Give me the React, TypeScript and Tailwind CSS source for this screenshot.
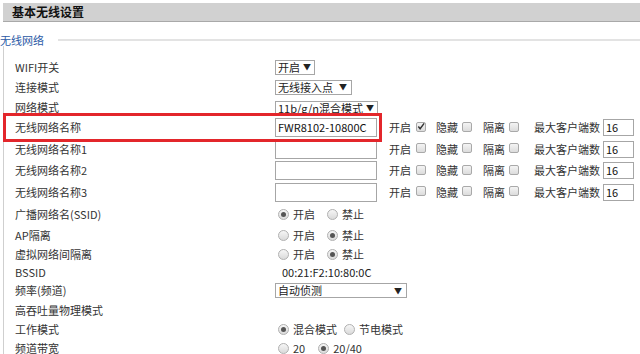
import React from "react";

const font = { fontFamily: '"Noto Sans CJK SC", "Noto Sans", sans-serif' };

function Select({ w, text }: { w: string; text: string }) {
  return (
    <div className={`${w} h-[15px] border border-[#a6a6a6] bg-white flex items-center justify-between pl-[2px] pr-[4px] text-[11px] leading-none text-[#222] whitespace-nowrap overflow-hidden`}>
      <span>{text}</span>
      <span className="text-[8px] text-[#222] ml-[3px]">▼</span>
    </div>
  );
}

function Checkbox({ checked }: { checked?: boolean }) {
  return (
    <div className="w-[10px] h-[10px] border border-[#a9a9a9] rounded-[2px] bg-gradient-to-b from-[#f4f4f4] to-[#dcdcdc] flex items-center justify-center mb-[2px]">
      {checked && (
        <svg width="9" height="9" viewBox="0 0 9 9">
          <path d="M1.5 4.5 L3.5 7 L8 1" stroke="#333" strokeWidth="1.6" fill="none" />
        </svg>
      )}
    </div>
  );
}

function Radio({ checked }: { checked?: boolean }) {
  return (
    <div className="w-[11px] h-[11px] rounded-full border border-[#b0b0b0] bg-gradient-to-b from-[#f6f6f6] to-[#dadada] flex items-center justify-center">
      {checked && <div className="w-[5px] h-[5px] rounded-full bg-[#555]" />}
    </div>
  );
}

function Row({ h, label, children, extra }: { h: string; label: string; children?: React.ReactNode; extra?: React.ReactNode }) {
  return (
    <div className={`relative flex items-center ${h} pl-[11px]`}>
      <div className="w-[260px] text-[11px] leading-none text-[#333] whitespace-nowrap">{label}</div>
      {children}
      {extra}
    </div>
  );
}

function SsidControls({ value, checked }: { value: string; checked?: boolean }) {
  return (
    <div className="flex items-center">
      <div className="w-[102px] h-[19px] border border-[#a6a6a6] bg-white flex items-center pl-[2px] text-[11px] leading-none text-[#111]">
        {value}
      </div>
      <div className="flex items-center ml-[12px] w-[47px] text-[11px] leading-none text-[#333]">
        <span>开启</span>
        <span className="ml-[5px]"><Checkbox checked={checked} /></span>
      </div>
      <div className="flex items-center w-[47px] text-[11px] leading-none text-[#333]">
        <span>隐藏</span>
        <span className="ml-[4px]"><Checkbox /></span>
      </div>
      <div className="flex items-center w-[51px] text-[11px] leading-none text-[#333]">
        <span>隔离</span>
        <span className="ml-[4px]"><Checkbox /></span>
      </div>
      <div className="w-[69px] text-[11px] leading-none text-[#333] whitespace-nowrap">最大客户端数</div>
      <div className="w-[31px] h-[17px] border border-[#a6a6a6] bg-white flex items-center pl-[2px] text-[11px] leading-none text-[#111]">
        16
      </div>
    </div>
  );
}

function RadioPair({ a, b, sel, gapA }: { a: string; b: string; sel: 0 | 1; gapA: string }) {
  return (
    <div className="flex items-center text-[11px] leading-none text-[#333]">
      <span className="ml-[3px]"><Radio checked={sel === 0} /></span>
      <span className="ml-[4px]">{a}</span>
      <span className={gapA}><Radio checked={sel === 1} /></span>
      <span className="ml-[4px]">{b}</span>
    </div>
  );
}

export default function App() {
  return (
    <div className="w-[640px] h-[354px] bg-white overflow-hidden" style={font}>
      <div className="pt-[3px] pl-[3px]">
        <div className="h-[19px] bg-[#d1d1d1] border-b border-[#a9a9a9] flex items-center pl-[9px]">
          <span className="text-[12px] font-bold leading-none text-[#111]">基本无线设置</span>
        </div>
      </div>
      <div className="flex items-center h-[12px] mt-[12px]">
        <span className="text-[11px] leading-none text-[#2b5aa6]">无线网络</span>
        <div className="flex-1 h-[2px] bg-[#e3e3e3] ml-[14px]" />
      </div>
      <div className="ml-[3px] border-l border-[#cfcfcf] pt-[11px]">
        <Row h="h-[20px]" label="WIFI开关">
          <Select w="w-[40px]" text="开启" />
        </Row>
        <Row h="h-[20px]" label="连接模式">
          <Select w="w-[77px]" text="无线接入点" />
        </Row>
        <Row h="h-[20px]" label="网络模式">
          <div className="mt-[2px]"><Select w="w-[103px]" text="11b/g/n混合模式" /></div>
        </Row>
        <Row
          h="h-[21px]"
          label="无线网络名称"
          extra={<div className="absolute left-[-1px] top-[-4px] w-[379px] h-[29px] border-[3px] border-[#e3262b] z-10 pointer-events-none" />}
        >
          <SsidControls value="FWR8102-10800C" checked />
        </Row>
        <Row h="h-[22px]" label="无线网络名称1">
          <SsidControls value="" />
        </Row>
        <Row h="h-[21px]" label="无线网络名称2">
          <SsidControls value="" />
        </Row>
        <Row h="h-[22px]" label="无线网络名称3">
          <SsidControls value="" />
        </Row>
        <Row h="h-[23px]" label="广播网络名(SSID)">
          <RadioPair a="开启" b="禁止" sel={0} gapA="ml-[12px]" />
        </Row>
        <Row h="h-[19px]" label="AP隔离">
          <RadioPair a="开启" b="禁止" sel={1} gapA="ml-[12px]" />
        </Row>
        <Row h="h-[19px]" label="虚拟网络间隔离">
          <RadioPair a="开启" b="禁止" sel={1} gapA="ml-[12px]" />
        </Row>
        <Row h="h-[17px]" label="BSSID">
          <span className="ml-[7px] text-[11px] leading-none text-[#222]">00:21:F2:10:80:0C</span>
        </Row>
        <Row h="h-[19px]" label="频率(频道)">
          <Select w="w-[132px]" text="自动侦测" />
        </Row>
        <Row h="h-[20px]" label="高吞吐量物理模式" />
        <Row h="h-[19px]" label="工作模式">
          <RadioPair a="混合模式" b="节电模式" sel={0} gapA="ml-[7px]" />
        </Row>
        <Row h="h-[18px]" label="频道带宽">
          <RadioPair a="20" b="20/40" sel={1} gapA="ml-[13px]" />
        </Row>
      </div>
    </div>
  );
}
